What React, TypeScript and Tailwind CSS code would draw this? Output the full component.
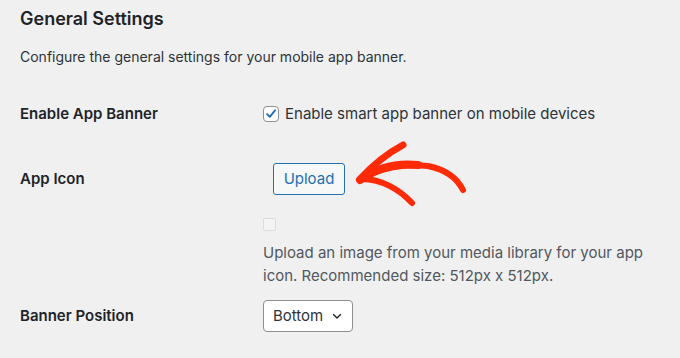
export default function App() {
  return (
    <div className="relative min-h-screen w-full bg-[#f0f0f1] px-5 font-['Inter','Liberation_Sans',sans-serif] text-[#1d2327]">
      <h2 className="pt-[7px] text-[18px] font-semibold leading-[24px]">General Settings</h2>
      <p className="mt-4 text-[14px] leading-[20px] text-[#2c3338]">
        Configure the general settings for your mobile app banner.
      </p>

      {/* Enable banner */}
      <div className="mt-[37px] flex items-center">
        <div className="w-[243px] text-[15px] font-semibold leading-[20px]">Enable App Banner</div>
        <label className="flex items-center gap-[6px] text-[15px] leading-[20px] text-[#2c3338]">
          <span className="flex h-4 w-4 items-center justify-center rounded-[4px] border border-[#8c8f94] bg-white">
            <svg viewBox="0 0 16 16" className="h-[14px] w-[14px]">
              <path d="M3.5 8.2 L6.6 11.2 L12.6 3.8" fill="none" stroke="#2271b1" strokeWidth="2.2" strokeLinecap="round" strokeLinejoin="round" />
            </svg>
          </span>
          Enable smart app banner on mobile devices
        </label>
      </div>

      {/* App icon */}
      <div className="mt-[39px] flex">
        <div className="flex h-8 w-[243px] items-center text-[15px] font-semibold">App Icon</div>
        <div className="flex flex-col">
          <button className="ml-[10px] h-8 w-[72px] rounded-[3px] border border-[#2271b1] bg-[#f6f7f7] text-[15px] text-[#2271b1]">
            Upload
          </button>
          <span className="mt-[23px] h-[13px] w-[13px] rounded-[2px] border border-[#dcdcde] bg-[#f4f4f5]" />
          <p className="mt-[10px] w-[390px] text-[15px] leading-[23px] text-[#50575e]">
            Upload an image from your media library for your app icon. Recommended size: 512px x 512px.
          </p>
        </div>
      </div>

      {/* Banner position */}
      <div className="mt-[13px] flex items-center">
        <div className="w-[243px] text-[15px] font-semibold">Banner Position</div>
        <div className="flex h-8 w-[90px] items-center justify-between rounded-[4px] border border-[#8c8f94] bg-white pl-[9px] pr-[9px] text-[15px] text-[#2c3338]">
          <span>Bottom</span>
          <svg viewBox="0 0 12 12" className="h-3 w-3">
            <path d="M2.5 4.5 L6 8 L9.5 4.5" fill="none" stroke="#1d2327" strokeWidth="1.4" strokeLinecap="round" strokeLinejoin="round" />
          </svg>
        </div>
      </div>

      {/* Annotation arrow */}
      <svg className="pointer-events-none absolute left-0 top-0" width="680" height="358" viewBox="0 0 680 358">
        <g fill="none" stroke="#ff2a06" strokeLinecap="round" strokeLinejoin="round">
          <path d="M360 179 C 380 168, 405 163, 428 166 C 448 170, 458 180, 463 190" strokeWidth="6" />
          <path d="M360 180 C 374 170, 392 162, 418 165" strokeWidth="8" />
          <path d="M360 179 C 372 166, 388 153, 403 145" strokeWidth="7" />
          <path d="M362 179 C 382 179, 400 190, 412 203" strokeWidth="6" />
        </g>
      </svg>
    </div>
  );
}
